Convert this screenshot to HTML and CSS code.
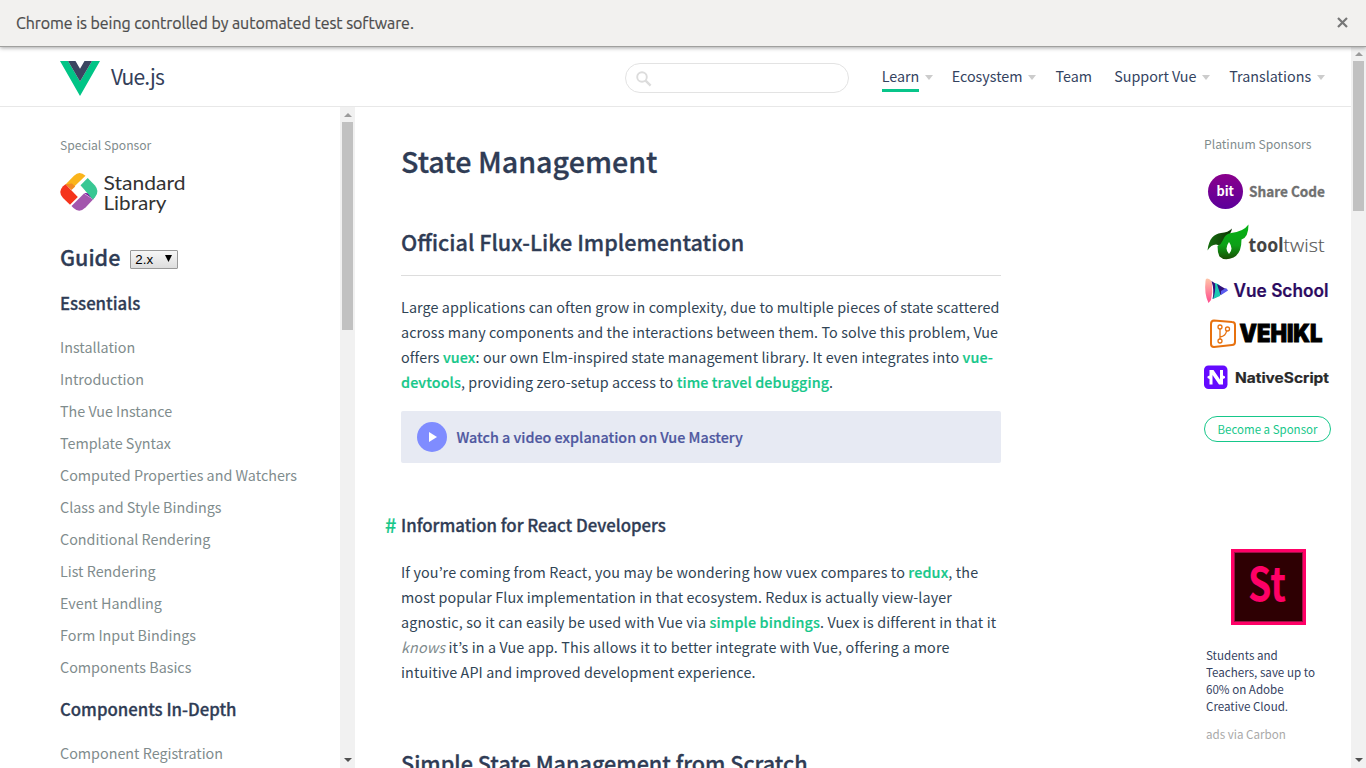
FILE: index.html
```html
<!DOCTYPE html>
<html lang="en">
<head>
<meta charset="utf-8">
<title>State Management — Vue.js</title>
<link rel="stylesheet" href="styles.css">
</head>
<body>
<div class="infobar">
  <span class="infobar-text">Chrome is being controlled by automated test software.</span>
  <svg class="infobar-close" width="11" height="11" viewBox="0 0 11 11"><path d="M1 1l9 9M10 1l-9 9" stroke="#777" stroke-width="2.2"/></svg>
</div>
<div class="viewport">
  <div class="site">
    <header class="header">
      <a class="logo">
        <svg width="40" height="35" viewBox="0 0 40 35"><path d="M0 0h8l12 20.500L32 0h8L20 35z" fill="#00c586"/><path d="M8 0h7.500L20 7.800 24.500 0H32L20 20.500z" fill="#3b4560"/></svg>
        <span>Vue.js</span>
      </a>
      <div class="search"><svg width="16" height="16" viewBox="0 0 16 16"><circle cx="6" cy="6" r="4.800" fill="none" stroke="#dcdcdc" stroke-width="1.900"/><path d="M9.600 9.600l5 5" stroke="#dcdcdc" stroke-width="2.400"/></svg></div>
      <nav class="nav">
        <a class="more"><span class="current">Learn</span></a>
        <a class="more"><span>Ecosystem</span></a>
        <a><span>Team</span></a>
        <a class="more"><span>Support Vue</span></a>
        <a class="more"><span>Translations</span></a>
      </nav>
    </header>
    <div class="columns">
      <aside class="sidebar">
        <div class="side-inner">
          <div class="label">Special Sponsor</div>
          <svg class="stdlib" width="130" height="48" viewBox="0 0 130 48">
            <path d="M5.500 12.500L14 3.800q5.500-5.500 11.500 0L19.500 9.500 11.500 17.200z" fill="#fab41b"/>
            <path d="M5.500 12.200L12 11.500 15.200 14.500 11.500 18z" fill="#f28a22"/>
            <path d="M5.500 12.200L17.800 25 10 32.700 3 26q-5.500-6 0-11.800z" fill="#f5341c"/>
            <path d="M11.500 34L24 21.500 33 27.500 25.500 35.500q-6 6-12 .5z" fill="#a356ad"/>
            <path d="M24 21l8.500.500 1.200 6z" fill="#7a0b9c"/>
            <path d="M20.500 13.200L27.700 6 35 13.500q5 6 0 11.800L32.800 27.500z" fill="#38c793"/>
            <text x="43.500" y="17.500" textLength="82" lengthAdjust="spacingAndGlyphs">Standard</text>
            <text x="43.500" y="37.500" textLength="63" lengthAdjust="spacingAndGlyphs">Library</text>
          </svg>
          <div class="guide"><h2>Guide</h2><div class="select"><span>2.x</span><svg width="7" height="7" viewBox="0 0 7 7"><path d="M0 0h7L3.500 7z"/></svg></div></div>
          <h3>Essentials</h3>
          <ul>
            <li>Installation</li><li>Introduction</li><li>The Vue Instance</li><li>Template Syntax</li><li>Computed Properties and Watchers</li><li>Class and Style Bindings</li><li>Conditional Rendering</li><li>List Rendering</li><li>Event Handling</li><li>Form Input Bindings</li><li>Components Basics</li>
          </ul>
          <h3>Components In-Depth</h3>
          <ul><li>Component Registration</li></ul>
        </div>
        <div class="bar side-bar"><i class="up"></i><b class="thumb"></b><i class="down"></i></div>
      </aside>
      <main class="content">
        <h1>State Management</h1>
        <h2 class="ruled">Official Flux-Like Implementation</h2>
        <p>Large applications can often grow in complexity, due to multiple pieces of state scattered<br>across many components and the interactions between them. To solve this problem, Vue<br>offers <a>vuex</a>: our own Elm-inspired state management library. It even integrates into <a>vue-<br>devtools</a>, providing zero-setup access to <a>time travel debugging</a>.</p>
        <div class="video"><svg width="30" height="30" viewBox="0 0 30 30"><circle cx="15" cy="15" r="15" fill="#7f8cff"/><path d="M12 10v10l8-5z" fill="#fff"/></svg><span>Watch a video explanation on Vue Mastery</span></div>
        <h3><a class="hash">#</a>Information for React Developers</h3>
        <p><span class="wide">If you’re coming from React, you may be wondering how vuex compares to <a>redux</a>, the</span><br>most popular Flux implementation in that ecosystem. Redux is actually view-layer<br><span class="wide">agnostic, so it can easily be used with Vue via <a>simple bindings</a>. Vuex is different in that it</span><br><span class="wide"><em>knows</em> it’s in a Vue app. This allows it to better integrate with Vue, offering a more</span><br>intuitive API and improved development experience.</p>
        <h2 class="next">Simple State Management from Scratch</h2>
      </main>
      <aside class="sponsors">
        <div class="label">Platinum Sponsors</div>
        <svg class="brands" width="130" height="220" viewBox="0 0 130 220">
          <defs>
            <linearGradient id="bit" x2="0" y2="1"><stop stop-color="#8a008c"/><stop offset="1" stop-color="#5c009a"/></linearGradient>
            <linearGradient id="leaf"><stop stop-color="#167010"/><stop offset="1" stop-color="#0d3003"/></linearGradient>
            <linearGradient id="leaf2" x2="0" y2="1"><stop stop-color="#04b315"/><stop offset=".6" stop-color="#0da017"/><stop offset="1" stop-color="#194d04"/></linearGradient>
            <linearGradient id="peach" x2="0" y2="1"><stop stop-color="#ffc5a8"/><stop offset="1" stop-color="#ff4b8d"/></linearGradient>
          </defs>
          <circle cx="21.500" cy="21.500" r="17.500" fill="url(#bit)"/>
          <text x="12.500" y="26" class="t-bit" textLength="17.500" lengthAdjust="spacingAndGlyphs">bit</text>
          <text x="45" y="26.500" class="t-share" textLength="76" lengthAdjust="spacingAndGlyphs">Share Code</text>
          <path d="M3.500 80.500C5 68 10 64 17 63q7-.5 11-4.500-1 6-6 9-4 5-4 13-2-6-6-6-5 0-8.500 6z" fill="url(#leaf)"/>
          <path d="M13.500 76Q17.500 74 19 70q2-6 8-7 12-1 17.500-8.500 0 13-7 15 0 14-8 18-9 4-14-1-2-4-2-10.500zM25 72q-5 7 0 12 5-5 0-12z" fill="url(#leaf2)" fill-rule="evenodd"/>
          <text x="44.500" y="82" class="t-tool" textLength="35" lengthAdjust="spacingAndGlyphs">tool</text>
          <text x="79.500" y="82" class="t-twist" textLength="41" lengthAdjust="spacingAndGlyphs">twist</text>
          <path d="M1.500 111q0-3.500 3.500-2 3 1.500 3 5 1 8-1 16l-2.500 3Q0 124 1.500 111z" fill="url(#peach)"/>
          <path d="M7.500 111l6 4 1 11-6 3q2-9-1-18z" fill="#31107a"/>
          <path d="M11 113q5 1 6 5 0 6-1 8l-7 3q3-8 2-16z" fill="#1cc9b3"/>
          <path d="M13 114l10.500 6-7 5z" fill="#31107a"/><path d="M17 121l5-3 2 2.500-7 4.500z" fill="#5a5cf0"/>
          <text x="29.500" y="127" class="t-school" textLength="95" lengthAdjust="spacingAndGlyphs">Vue School</text>
          <path d="M10 150.500l18 1.500q3 0 3 3v17q0 3-3 3l-18 2q-3 0-3-3v-20q0-3.500 3-3.500z" fill="none" stroke="#e7710f" stroke-width="2"/>
          <g fill="none" stroke="#e7710f" stroke-width="1.300"><circle cx="16" cy="157" r="2"/><circle cx="23.500" cy="159" r="2"/><circle cx="16" cy="171" r="2"/><path d="M16 159v10M16 167q6-1 6.500-6"/></g>
          <text x="35.500" y="171.500" class="t-vehikl" textLength="83" lengthAdjust="spacingAndGlyphs">VEHIKL</text>
          <rect x="0" y="195.500" width="23.500" height="23.500" rx="4.500" fill="#640aff"/>
          <path d="M3.500 206.500l2-1V200h4l6.500 9.500V200h3v5.500l2 1v1.500l-2 1v5.500h-4L8.500 205v9.500h-3V209l-2-1z" fill="#fff"/>
          <text x="31" y="213" class="t-native" textLength="94" lengthAdjust="spacingAndGlyphs">NativeScript</text>
        </svg>
        <a class="become">Become a Sponsor</a>
        <svg class="ad-image" width="75" height="76" viewBox="0 0 75 76"><rect width="75" height="76" fill="#f06"/><rect x="3.500" y="3.500" width="68" height="69" fill="#2e0003" stroke="#9c1046"/><text x="17" y="52" textLength="38" lengthAdjust="spacingAndGlyphs">St</text></svg>
        <p class="ad-text">Students and<br>Teachers, save up to<br>60% on Adobe<br>Creative Cloud.</p>
        <p class="ad-via">ads via Carbon</p>
      </aside>
    </div>
  </div>
  <div class="bar page-bar"><i class="up"></i><b class="thumb"></b><i class="down"></i></div>
</div>
</body>
</html>
```
FILE: styles.css
```css
*{box-sizing:border-box}
body{margin:0;height:768px;overflow:hidden;display:flex;flex-direction:column;background:#fff;color:#304455;font:14.33px "Noto Sans CJK JP","Noto Sans",sans-serif;white-space:nowrap}
h1,h2,h3,p,ul{margin:0;padding:0;list-style:none}
h1,h2,h3{color:#2f3c55;font-weight:500;-webkit-text-stroke:.3px #2f3c55}

.infobar{position:relative;flex:none;height:47px;display:flex;justify-content:space-between;align-items:center;padding:0 18px 1px 16px;background:#f2f1ef;border-bottom:1px solid #a0a09e;box-shadow:0 1px 4px rgba(0,0,0,.35);z-index:2}
.infobar-text{font:400 16px "Ubuntu","Noto Sans",sans-serif;letter-spacing:-.06px;color:#4c4c4c;-webkit-text-stroke:.2px #4c4c4c}

.viewport{flex:1;min-height:0;display:flex}
.site{flex:1;display:flex;flex-direction:column;min-height:0}

.header{flex:none;height:60px;display:flex;align-items:flex-start;border-bottom:1px solid #e8e8e8;padding-left:60px}
.logo{display:flex;width:565px;padding-top:14px;gap:11px}
.logo span{font-size:21px;line-height:30px;color:#34405a;letter-spacing:-.8px}
.search{width:224px;height:30px;margin-top:16px;border:1px solid #e3e3e3;border-radius:15px;padding:7px 0 0 10px}
.search svg{display:block}
.nav{margin-left:32.700px;display:grid;grid-template-columns:70px 103.800px 58.700px 115px 100px;padding-top:13px;color:#34435f}
.nav a{display:flex;align-items:flex-start;gap:5.500px}
.nav span{line-height:31px;height:32px}
.nav .more::after{content:"";border:4px solid transparent;border-top:5px solid #ccc;border-bottom:0;margin-top:15px}
.nav .current{border-bottom:3px solid #08c58a}

.columns{flex:1;min-height:0;display:flex;overflow:hidden}
.sidebar{width:355px;display:flex;overflow:hidden}
.side-inner{width:340px;padding:28px 0 0 60px;overflow:hidden}
.label{font-size:12.150px;line-height:20px;color:#7f8c8d}
.stdlib{display:block;margin-top:17px;overflow:visible}
.stdlib text{font:20px "Lato","Noto Sans",sans-serif;fill:#333}
.guide{display:flex;align-items:flex-start;gap:10px;margin-top:21px}
.guide h2{font-size:21.500px;line-height:32px}
.select{width:48px;height:19px;margin-top:9px;border:1px solid #999;border-radius:1px;background:linear-gradient(#f7f7f7,#ddd);display:flex;align-items:center;justify-content:space-between;padding:0 5px 0 4px;font:13.330px "Liberation Sans",sans-serif;color:#000}
.select svg{margin-top:-2px}
.sidebar h3{font-size:16.750px;line-height:30px;margin-top:15px}
.sidebar ul{margin-top:13px}
.sidebar ul+h3{margin-top:11px}
.sidebar li{line-height:32px;color:#7f8c8d}

.bar{flex:none;width:15px;background:#f1f1f1;display:flex;flex-direction:column;align-items:center}
.bar .up{border:4px solid transparent;border-bottom:4px solid #9b9b9b;border-top:0;margin:6px 0 5px}
.bar .thumb{width:11px;background:#c1c1c1}
.bar .down{border:4px solid transparent;border-top:4px solid #505050;border-bottom:0;margin-top:auto;margin-bottom:6px}
.side-bar .thumb{height:208px}
.page-bar .thumb{height:150px}
.page-bar .up{margin-top:5px}

.content{width:600px;margin-left:46px;padding-top:34px}
.content h1{font-size:28.700px;line-height:40px}
.content h2{font-size:21.600px;line-height:40px}
.content .ruled{margin-top:41px;height:54px;border-bottom:1px solid #ddd}
.content p{line-height:25px;letter-spacing:.1px;margin-top:18px}
.content p a{color:#16c78a;font-weight:500;-webkit-text-stroke:.2px #16c78a}
.content .wide{letter-spacing:.14px}
.content em{color:#7f8c8d}
.video{height:52px;margin-top:17px;background:#e7eaf3;border-radius:2px;display:flex;align-items:center;gap:9.500px;padding-left:16px;color:#4f58a0;font-weight:500;-webkit-text-stroke:.2px #4f58a0}
.video span{padding-bottom:2px}
.content h3{font-size:16.800px;line-height:30px;margin-top:47px;display:flex}
.hash{color:#16c78a;-webkit-text-stroke:.2px #16c78a;width:16px;margin-left:-16px;font-size:20px}
.content h3+p{margin-top:19px}
.content .next{margin-top:59px}

.sponsors{width:127px;margin-left:203px;padding-top:27px}
.brands{display:block;margin-top:16px;overflow:visible}
.brands .t-bit{font:700 13px "Noto Sans CJK JP",sans-serif;fill:#fff}
.brands .t-share{font:700 14px "Noto Sans CJK JP",sans-serif;fill:#707070;stroke:#707070;stroke-width:.3px}
.brands .t-tool{font:700 19px "Noto Sans",sans-serif;fill:#444}
.brands .t-twist{font:300 19px "Open Sans",sans-serif;fill:#555;stroke:#555;stroke-width:.2px}
.t-school{font:600 18px "Inter",sans-serif;fill:#2c0a60;stroke:#2c0a60;stroke-width:.2px}
.t-vehikl{font:900 24px "Inter",sans-serif;fill:#000;stroke:#000;stroke-width:.9px}
.t-native{font:700 14px "Inter",sans-serif;fill:#292929;stroke:#292929;stroke-width:.2px}
.become{display:block;width:127px;height:26px;margin-top:26px;border:1px solid #16c78a;border-radius:13px;text-align:center;font-size:11.500px;line-height:25px;color:#16c78a}
.ad-image{display:block;margin:107px 0 0 27px}
.ad-image text{font:700 46px "Noto Sans CJK JP",sans-serif;fill:#f06}
.ad-text{margin:22px 0 0 2px;font-size:11.600px;line-height:17px;color:#35425f}
.ad-via{margin:10px 0 0 2px;font-size:11.600px;line-height:18px;color:#a9a9a9}
```
